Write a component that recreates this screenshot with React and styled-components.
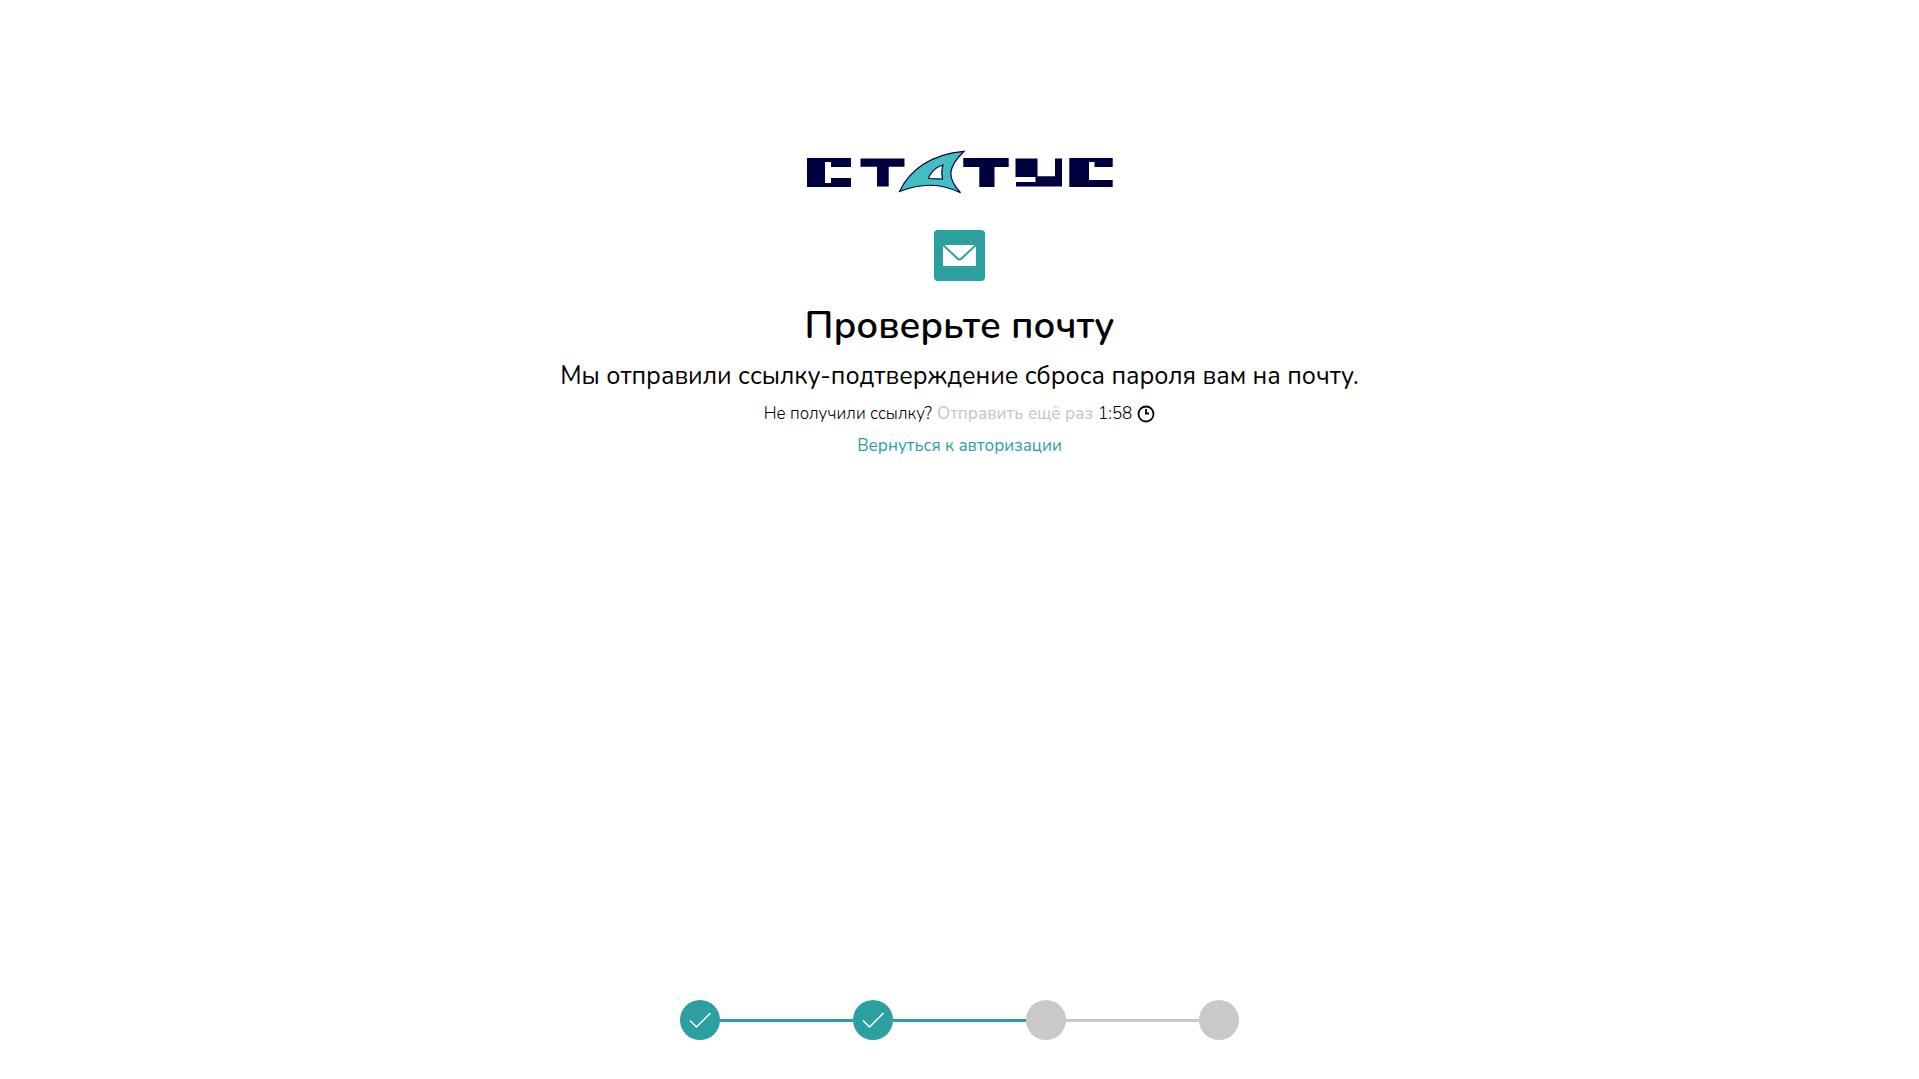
import React from "react";
import styled, { createGlobalStyle } from "styled-components";

const GlobalStyle = createGlobalStyle`
  *, *::before, *::after { box-sizing: border-box; }
  body {
    margin: 0;
    background: #fff;
    color: #000;
    font-family: Nunito, "Open Sans", "Noto Sans", sans-serif;
  }
`;

const Page = styled.main`
  min-height: 100vh;
  display: flex;
  flex-direction: column;
  align-items: center;
  justify-content: space-between;
  padding: 148px 24px 39px;
`;

const Content = styled.section`
  display: flex;
  flex-direction: column;
  align-items: center;
  text-align: center;
`;

const Logo = styled.svg`
  display: block;
  width: 310px;
  height: 48px;
`;

const MailBadge = styled.div`
  display: flex;
  align-items: center;
  justify-content: center;
  width: 51px;
  height: 51px;
  margin-top: 34px;
  border-radius: 4px;
  background: #2c9fa1;
`;

const Title = styled.h1`
  margin: 21px 0 0;
  font-size: 38px;
  line-height: 48px;
  font-weight: 600;
`;

const Lead = styled.p`
  margin: 10px 0 0;
  font-size: 25px;
  line-height: 32px;
  font-weight: 400;
`;

const Hint = styled.div`
  display: flex;
  align-items: center;
  gap: 5px;
  margin-top: 10px;
  font-size: 17px;
  line-height: 24px;
  font-weight: 300;
`;

const ResendButton = styled.button`
  padding: 0;
  border: 0;
  background: none;
  color: #c9c9c9;
  font: inherit;
  font-weight: 500;
`;

const BackLink = styled.a`
  margin-top: 8px;
  color: #2c9fa1;
  font-size: 17px;
  line-height: 24px;
  font-weight: 400;
  text-decoration: none;
`;

const Steps = styled.ol`
  display: flex;
  align-items: center;
  width: 560px;
  max-width: 100%;
  margin: 0;
  padding: 0;
  list-style: none;
`;

const Step = styled.li`
  display: flex;
  align-items: center;
  flex: ${(p) => (p.$first ? "none" : "1")};

  &::before {
    content: "";
    display: ${(p) => (p.$first ? "none" : "block")};
    flex: 1;
    height: 3px;
    background: ${(p) => (p.$reached ? "#2c9fa1" : "#c9c9c9")};
  }
`;

const Dot = styled.span`
  display: flex;
  align-items: center;
  justify-content: center;
  width: 40px;
  height: 40px;
  border-radius: 50%;
  background: ${(p) => (p.$done ? "#2c9fa1" : "#c9c9c9")};
`;

const steps = [
  { done: true, reached: true },
  { done: true, reached: true },
  { done: false, reached: true },
  { done: false, reached: false },
];

function StatusLogo() {
  return (
    <Logo viewBox="805 148 310 48" role="img" aria-label="Статус">
      <g fill="#00003f">
        <path d="M807 158H851V167H831V162H825V183H831V178H851V187H807Z" />
        <path d="M860.5 158.500H904.500V166.700H888.700V186.500H877V166.700H860.500Z" />
        <path d="M963.300 158H1008.700V167H994.500V187H979.300V167H963.300Z" />
        <path d="M1015.500 158.500H1037.500V176.300H1055V158.500H1062V186.500H1016V182H1035.500V177H1015.500Z" />
        <path d="M1069.300 158H1112.700V167H1094.500V162H1089V180H1112.700V187H1069.300Z" />
      </g>
      <path
        d="M899.500 191.500C910 170 931 154 964 151.300C947 168 947 178 960.500 192.700C940 183 922 183 899.500 191.500ZM943 165C936 167 930 173 928.500 178.500L942.500 179C941.500 174 941.500 170 943 165Z"
        fill="#42bfc2"
        fillRule="evenodd"
        stroke="#00003f"
        strokeWidth="1.200"
      />
    </Logo>
  );
}

function MailIcon() {
  return (
    <svg width="33" height="21" viewBox="0 0 33 21" aria-hidden="true">
      <path d="M0 0H33V21H0Z" fill="#fff" />
      <path d="M0 0L14.500 13.500Q16.500 15.500 18.500 13.500L33 0" fill="none" stroke="#2c9fa1" strokeWidth="2" />
    </svg>
  );
}

function ClockIcon() {
  return (
    <svg width="18" height="18" viewBox="0 0 18 18" fill="none" stroke="#000" aria-hidden="true">
      <circle cx="9" cy="9" r="7.500" strokeWidth="1.800" />
      <path d="M9 4V8.500H12" strokeWidth="1.800" />
    </svg>
  );
}

function CheckIcon() {
  return (
    <svg width="22" height="16" viewBox="0 0 22 16" fill="none" stroke="#fff" strokeWidth="1.500" aria-hidden="true">
      <path d="M1 8.500L7.500 15L21.500 1" />
    </svg>
  );
}

export default function App() {
  return (
    <>
      <GlobalStyle />
      <Page>
        <Content>
          <StatusLogo />
          <MailBadge>
            <MailIcon />
          </MailBadge>
          <Title>Проверьте почту</Title>
          <Lead>Мы отправили ссылку-подтверждение сброса пароля вам на почту.</Lead>
          <Hint>
            <span>Не получили ссылку?</span>
            <ResendButton type="button" disabled>
              Отправить ещё раз
            </ResendButton>
            <span>1:58</span>
            <ClockIcon />
          </Hint>
          <BackLink href="#login">Вернуться к авторизации</BackLink>
        </Content>
        <Steps>
          {steps.map((step, index) => (
            <Step key={index} $first={index === 0} $reached={step.reached}>
              <Dot $done={step.done}>{step.done && <CheckIcon />}</Dot>
            </Step>
          ))}
        </Steps>
      </Page>
    </>
  );
}
